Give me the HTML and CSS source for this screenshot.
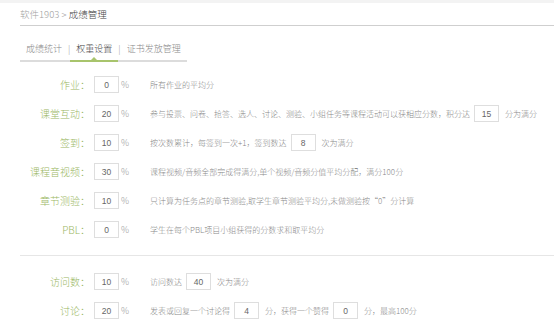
FILE: index.html
```html
<!DOCTYPE html>
<html lang="zh-CN">
<head>
    <meta charset="UTF-8">
    <title>成绩管理</title>
    <link rel="stylesheet" href="styles.css">
</head>
<body>
    <div class="top-strip"></div>
    <div class="crumb">
        <span class="crumb-parent">软件1903 &gt;</span>
        <span class="crumb-current">成绩管理</span>
    </div>

    <div class="tabs">
        <span class="tab">成绩统计</span><span class="sep">|</span><span class="tab active">权重设置</span><span class="sep">|</span><span class="tab">证书发放管理</span>
    </div>

    <div class="section">
        <div class="row">
            <label class="label">作业：</label>
            <input class="num" type="text" value="0">
            <span class="unit">%</span>
            <span class="desc">所有作业的平均分</span>
        </div>
        <div class="row">
            <label class="label">课堂互动：</label>
            <input class="num" type="text" value="20">
            <span class="unit">%</span>
            <span class="desc">参与投票、问卷、抢答、选人、讨论、测验、小组任务等课程活动可以获相应分数，积分达<input class="num inline" type="text" value="15">分为满分</span>
        </div>
        <div class="row">
            <label class="label">签到：</label>
            <input class="num" type="text" value="10">
            <span class="unit">%</span>
            <span class="desc">按次数累计，每签到一次+1，签到数达<input class="num inline" type="text" value="8">次为满分</span>
        </div>
        <div class="row">
            <label class="label">课程音视频：</label>
            <input class="num" type="text" value="30">
            <span class="unit">%</span>
            <span class="desc">课程视频/音频全部完成得满分,单个视频/音频分值平均分配，满分100分</span>
        </div>
        <div class="row">
            <label class="label">章节测验：</label>
            <input class="num" type="text" value="10">
            <span class="unit">%</span>
            <span class="desc">只计算为任务点的章节测验,取学生章节测验平均分,未做测验按“0”分计算</span>
        </div>
        <div class="row">
            <label class="label">PBL：</label>
            <input class="num" type="text" value="0">
            <span class="unit">%</span>
            <span class="desc">学生在每个PBL项目小组获得的分数求和取平均分</span>
        </div>
    </div>

    <div class="section second">
        <div class="row">
            <label class="label">访问数：</label>
            <input class="num" type="text" value="10">
            <span class="unit">%</span>
            <span class="desc">访问数达<input class="num inline" type="text" value="40">次为满分</span>
        </div>
        <div class="row">
            <label class="label">讨论：</label>
            <input class="num" type="text" value="20">
            <span class="unit">%</span>
            <span class="desc">发表或回复一个讨论得<input class="num inline" type="text" value="4">分，获得一个赞得<input class="num inline" type="text" value="0">分，最高100分</span>
        </div>
    </div>
</body>
</html>
```

FILE: styles.css
```css
body {
    margin: 0;
    background-color: #fff;
    font-family: "Noto Sans CJK SC", "Liberation Sans", sans-serif;
    font-weight: 300;
    color: #777;
    overflow: hidden;
}
.top-strip {
    height: 3px;
    background-color: #f3f3f3;
}
.crumb {
    margin-left: 20px;
    height: 22px;
    line-height: 22px;
    font-size: 9.5px;
    border-bottom: 1px solid #cfcfcf;
}
.crumb-parent {
    color: #a0a0a0;
}
.crumb-current {
    color: #444;
}
.tabs {
    margin-left: 20px;
    width: 167px;
    padding-top: 16px;
    border-bottom: 2px solid #dcdcdc;
    font-size: 9px;
    line-height: 14px;
    display: flex;
}
.tab {
    position: relative;
    padding: 0 6px 4px;
    color: #888;
}
.tab.active {
    color: #444;
    border-bottom: 2px solid #a8c46c;
    margin-bottom: -2px;
}
.tab.active::after {
    content: "";
    position: absolute;
    left: 50%;
    bottom: 0;
    margin-left: -3px;
    border-left: 3px solid transparent;
    border-right: 3px solid transparent;
    border-bottom: 3px solid #a8c46c;
}
.sep {
    color: #999;
    padding-bottom: 4px;
}
.section {
    padding-top: 8px;
    margin-left: 20px;
    padding-bottom: 11px;
    border-bottom: 1px solid #e6e6e6;
}
.section.second {
    border-bottom: none;
    padding-top: 11px;
}
.row {
    display: flex;
    align-items: center;
    height: 29px;
}
.label {
    width: 70px;
    padding-right: 1px;
    text-align: right;
    font-size: 10px;
    color: #9ab763;
}
.num {
    box-sizing: border-box;
    width: 25px;
    height: 17px;
    margin: 0 0 0 3px;
    padding: 0;
    border: 1px solid #dedede;
    background-color: #fff;
    font-family: "Liberation Sans", sans-serif;
    font-size: 8.5px;
    color: #666;
    text-align: center;
}
.unit {
    width: 29px;
    padding-left: 2px;
    font-size: 9px;
    color: #999;
}
.desc {
    display: flex;
    align-items: center;
    font-size: 8px;
    color: #888;
    white-space: nowrap;
}
.num.inline {
    width: 25px;
    margin: 0 6px 0 4px;
}
```
